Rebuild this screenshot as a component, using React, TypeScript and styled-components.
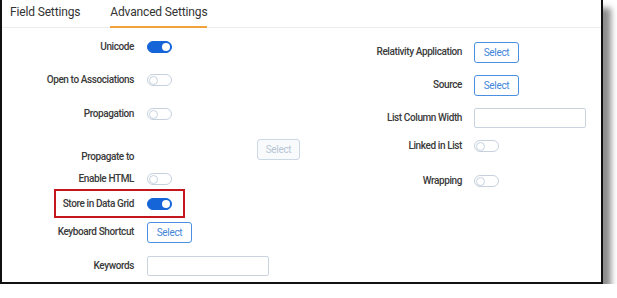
import styled, { createGlobalStyle } from "styled-components";

const GlobalStyle = createGlobalStyle`
  html, body {
    margin: 0;
    padding: 0;
    background: #ffffff;
  }
  body {
    font-family: Roboto, "Liberation Sans", Arial, sans-serif;
    color: #333;
  }
`;

// documentation frame with drop shadow
const Frame = styled.div`
  width: 599px;
  height: 282px;
  border: 2px solid #111;
  border-top: none;
  background: #fff;
  box-shadow: 8px 8px 6px rgba(0, 0, 0, 0.45);
  display: flex;
  flex-direction: column;
`;

const TabBar = styled.div`
  height: 27px;
  display: flex;
  gap: 30px;
  padding-left: 8px;
  border-bottom: 1px solid #ececec;
`;

const Tab = styled.div<{ $active?: boolean }>`
  height: 28px;
  box-sizing: border-box;
  padding-top: 4px;
  font-size: 12px;
  letter-spacing: -0.15px;
  line-height: 16px;
  color: #333;
  border-bottom: 2px solid ${(p) => (p.$active ? "#f2a23a" : "transparent")};
`;

const Body = styled.div`
  display: grid;
  grid-template-columns: 298px 1fr;
`;

const Column = styled.div<{ $labelWidth: number; $gap: number }>`
  display: flex;
  flex-direction: column;
  --label-width: ${(p) => p.$labelWidth}px;
  --gap: ${(p) => p.$gap}px;
`;

const Row = styled.div<{ $mt: number; $highlight?: boolean }>`
  position: relative;
  height: 22px;
  margin-top: ${(p) => p.$mt}px;
  display: flex;
  align-items: center;
  gap: var(--gap);

  ${(p) =>
    p.$highlight &&
    `
    &::after {
      content: "";
      position: absolute;
      left: 52px;
      width: 127px;
      top: -4px;
      bottom: -3px;
      border: 2px solid #c4161c;
      pointer-events: none;
    }
  `}
`;

const Label = styled.div<{ $drop?: number }>`
  width: var(--label-width);
  flex: none;
  text-align: right;
  font-size: 10px;
  font-weight: 500;
  letter-spacing: -0.4px;
  line-height: 12px;
  color: #3a3a3a;
  padding-top: ${(p) => p.$drop ?? 0}px;
`;

const Toggle = styled.div<{ $on?: boolean }>`
  width: 25px;
  height: 12px;
  box-sizing: border-box;
  border-radius: 6px;
  border: 1px solid ${(p) => (p.$on ? "#1565d8" : "#c6d1dd")};
  background: ${(p) => (p.$on ? "#1565d8" : "#fff")};
  display: flex;
  align-items: center;
  justify-content: ${(p) => (p.$on ? "flex-end" : "flex-start")};
  padding: 0 1px;

  &::before {
    content: "";
    width: ${(p) => (p.$on ? 8 : 9)}px;
    height: ${(p) => (p.$on ? 8 : 9)}px;
    box-sizing: border-box;
    border-radius: 50%;
    background: #fff;
    border: ${(p) => (p.$on ? "none" : "1px solid #c6d1dd")};
  }
`;

const SelectButton = styled.button<{ $offset?: number }>`
  width: 45px;
  height: 21px;
  margin-left: ${(p) => p.$offset ?? 0}px;
  padding: 0;
  border-radius: 3px;
  border: 1px solid #4a8fe0;
  background: #fff;
  color: #3f86da;
  font-family: Roboto, "Liberation Sans", Arial, sans-serif;
  font-size: 10px;
  letter-spacing: -0.3px;

  &:disabled {
    border-color: #cbd8e6;
    color: #b9c6d4;
    background: #f8fafc;
  }
`;

const TextInput = styled.input<{ $w: number }>`
  width: ${(p) => p.$w}px;
  height: 20px;
  box-sizing: border-box;
  border: 1px solid #cad4de;
  border-radius: 2px;
  padding: 0 4px;
  background: #fff;
`;

export default function App() {
  return (
    <>
      <GlobalStyle />
      <Frame>
        <TabBar>
          <Tab>Field Settings</Tab>
          <Tab $active>Advanced Settings</Tab>
        </TabBar>
        <Body>
          <Column $labelWidth={132} $gap={13}>
            <Row $mt={8}>
              <Label>Unicode</Label>
              <Toggle $on />
            </Row>
            <Row $mt={11}>
              <Label>Open to Associations</Label>
              <Toggle />
            </Row>
            <Row $mt={12}>
              <Label>Propagation</Label>
              <Toggle />
            </Row>
            <Row $mt={13}>
              <Label $drop={16}>Propagate to</Label>
              <SelectButton disabled $offset={110}>
                Select
              </SelectButton>
            </Row>
            <Row $mt={8}>
              <Label>Enable HTML</Label>
              <Toggle />
            </Row>
            <Row $mt={3} $highlight>
              <Label>Store in Data Grid</Label>
              <Toggle $on />
            </Row>
            <Row $mt={6}>
              <Label>Keyboard Shortcut</Label>
              <SelectButton>Select</SelectButton>
            </Row>
            <Row $mt={12}>
              <Label>Keywords</Label>
              <TextInput $w={122} />
            </Row>
          </Column>
          <Column $labelWidth={162} $gap={12}>
            <Row $mt={13}>
              <Label>Relativity Application</Label>
              <SelectButton>Select</SelectButton>
            </Row>
            <Row $mt={11}>
              <Label>Source</Label>
              <SelectButton>Select</SelectButton>
            </Row>
            <Row $mt={11}>
              <Label>List Column Width</Label>
              <TextInput $w={112} />
            </Row>
            <Row $mt={6}>
              <Label>Linked in List</Label>
              <Toggle />
            </Row>
            <Row $mt={13}>
              <Label>Wrapping</Label>
              <Toggle />
            </Row>
          </Column>
        </Body>
      </Frame>
    </>
  );
}
